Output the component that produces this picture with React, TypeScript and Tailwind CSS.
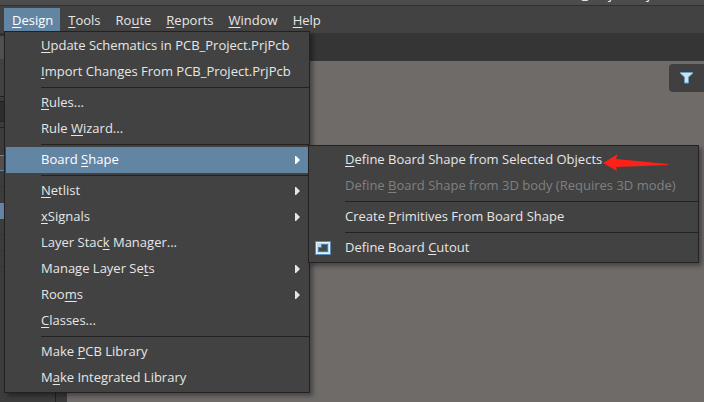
import type { ReactNode } from "react";

type Entry = { text: string; arrow?: boolean; active?: boolean; disabled?: boolean; icon?: ReactNode } | "separator";

const bar = ["_Design", "_Tools", "Ro_ute", "_Reports", "_Window", "_Help"];

function CutoutIcon() {
  return (
    <svg width="16" height="14" viewBox="0 0 16 14" shapeRendering="crispEdges" aria-hidden="true">
      <path fill="#5b88b3" d="M0 0h16v14H0z" />
      <path fill="#e4f3f9" d="M1 1h14v12H1z" />
      <path fill="#b9dcea" d="M2 2h12v10H2z" />
      <path fill="#4d7ca8" d="M6 3h7v8H3V6h3z" />
      <path fill="#3f4a52" d="M7 4h5v6H4V7h3z" />
    </svg>
  );
}

const designMenu: Entry[] = [
  { text: "_Update Schematics in PCB__Project.PrjPcb" },
  { text: "_Import Changes From PCB__Project.PrjPcb" },
  "separator",
  { text: "_Rules..." },
  { text: "Rule _Wizard..." },
  "separator",
  { text: "Board _Shape", arrow: true, active: true },
  "separator",
  { text: "_Netlist", arrow: true },
  { text: "_xSignals", arrow: true },
  { text: "Layer Stac_k Manager..." },
  { text: "Manage Layer Se_ts", arrow: true },
  { text: "Roo_ms", arrow: true },
  { text: "_Classes..." },
  "separator",
  { text: "Make _PCB Library" },
  { text: "M_ake Integrated Library" },
];

const shapeMenu: Entry[] = [
  { text: "_Define Board Shape from Selected Objects" },
  { text: "Define _Board Shape from 3D body (Requires 3D mode)", disabled: true },
  "separator",
  { text: "Create _Primitives From Board Shape" },
  "separator",
  { text: "Define Board _Cutout", icon: <CutoutIcon /> },
];

/* An underscore marks the access key; a doubled one is a literal underscore. */
function Mnemonic({ text }: { text: string }) {
  const at = text.search(/_(?!_)/);
  const clean = (s: string) => s.replace(/__/g, "_");
  return (
    <span className="whitespace-pre">
      {clean(text.slice(0, at))}
      <span className="underline decoration-1 underline-offset-2">{text[at + 1]}</span>
      {clean(text.slice(at + 2))}
    </span>
  );
}

function Menu({ entries, label }: { entries: Entry[]; label: string }) {
  return (
    <div role="menu" aria-label={label} className="border border-[#222222] bg-[#424242] py-px shadow-[3px_3px_4px_rgba(0,0,0,0.35)]">
      {entries.map((e, i) =>
        e === "separator" ? (
          <div key={i} role="separator" className="ml-9 py-0.5">
            <div className="h-px bg-[#222222]" />
          </div>
        ) : (
          <div key={i} className="px-px">
            <button
              role="menuitem"
              disabled={e.disabled}
              className={`flex h-[26px] w-full items-center pr-2 text-left ${
                e.active ? "bg-[#6385a4] text-white" : e.disabled ? "text-[#808080]" : "text-[#e6e6e6]"
              }`}
            >
              <span className="flex w-[35px] shrink-0 pl-[5px]">{e.icon}</span>
              <span className="grow pb-0.5">
                <Mnemonic text={e.text} />
              </span>
              {e.arrow && (
                <svg width="5" height="8" viewBox="0 0 5 8" fill="currentColor" aria-hidden="true">
                  <path d="M0 0h1l4 4-4 4H0z" />
                </svg>
              )}
            </button>
          </div>
        ),
      )}
    </div>
  );
}

/* The docked panel, of which the open menu leaves only the outer edge in view. */
function Panel() {
  return (
    <aside className="flex w-14 flex-col border-r border-[#222222] bg-[#3c3c3c]">
      <div className="h-[3px] bg-[#303030]" />
      <div className="h-[23px] bg-[#505050]" />
      <div className="h-[38px] border-b border-[#222222] bg-[#424242]" />
      <div className="h-[5px] border-b border-[#222222]" />
      <div className="h-5 border-b border-[#222222] bg-[#2d2d2d]" />
      <div className="h-[6px] border-b border-[#222222]" />
      <div className="h-[27px]" />
      <div className="h-4 border-y border-[#6385a4] bg-[#505050]" />
      <div className="h-4 border-b border-[#353535]" />
      <div className="h-4" />
      <div className="h-4 bg-[#6385a4]" />
      <div className="h-4 border-b border-[#353535]" />
      <div className="h-4 border-b border-[#353535]" />
      <div className="h-4 border-b border-[#353535]" />
    </aside>
  );
}

export default function App() {
  return (
    <div className="relative flex h-screen flex-col overflow-hidden bg-[#6f6b69] font-['Open_Sans','Noto_Sans',sans-serif] text-[13px] leading-[18px]">
      <header className="flex h-[5px] shrink-0 items-end justify-end overflow-hidden bg-[#4c4c4c] pr-8 pb-0.5 text-white">
        <span>PCB_Project.PrjPcb</span>
      </header>
      <nav className="flex h-7 shrink-0 items-start border-t border-[#2f2f2f] bg-[#424242] pt-0.5 pl-1 text-[#e6e6e6]">
        {bar.map((t, i) => (
          <button key={t} className={`h-[23px] pr-[7px] pl-2 ${i === 0 ? "bg-[#6385a4] text-white" : ""}`}>
            <Mnemonic text={t} />
          </button>
        ))}
      </nav>
      <div className="flex grow">
        <Panel />
        <div className="w-[11px] bg-[#3a3a3a]" />
        <div className="flex grow flex-col">
          <div className="h-7 bg-[#353535]" />
          <main className="flex grow items-start justify-end pt-[3px]">
            <button aria-label="Filter" className="flex h-7 w-[35px] items-center justify-center rounded-l bg-[#404040]">
              <svg width="13" height="12" viewBox="0 0 13 12" aria-hidden="true">
                <path fill="#c4e4f0" stroke="#6ba0c4" d="M.5 .5h12v1L8.500 5v6h-4V5L.5 1.500z" />
              </svg>
            </button>
          </main>
        </div>
      </div>
      <div className="absolute top-[31px] left-1 w-[306px]">
        <Menu entries={designMenu} label="Design" />
      </div>
      <div className="absolute top-[145px] left-[308px] w-[391px]">
        <Menu entries={shapeMenu} label="Board Shape" />
        <svg className="absolute top-2 left-[294px]" width="68" height="19" viewBox="0 0 68 19" aria-hidden="true">
          <path fill="#ff2018" d="M1 10L16 1l-2 5 52 5v1L14 14l1 4z" />
        </svg>
      </div>
    </div>
  );
}
